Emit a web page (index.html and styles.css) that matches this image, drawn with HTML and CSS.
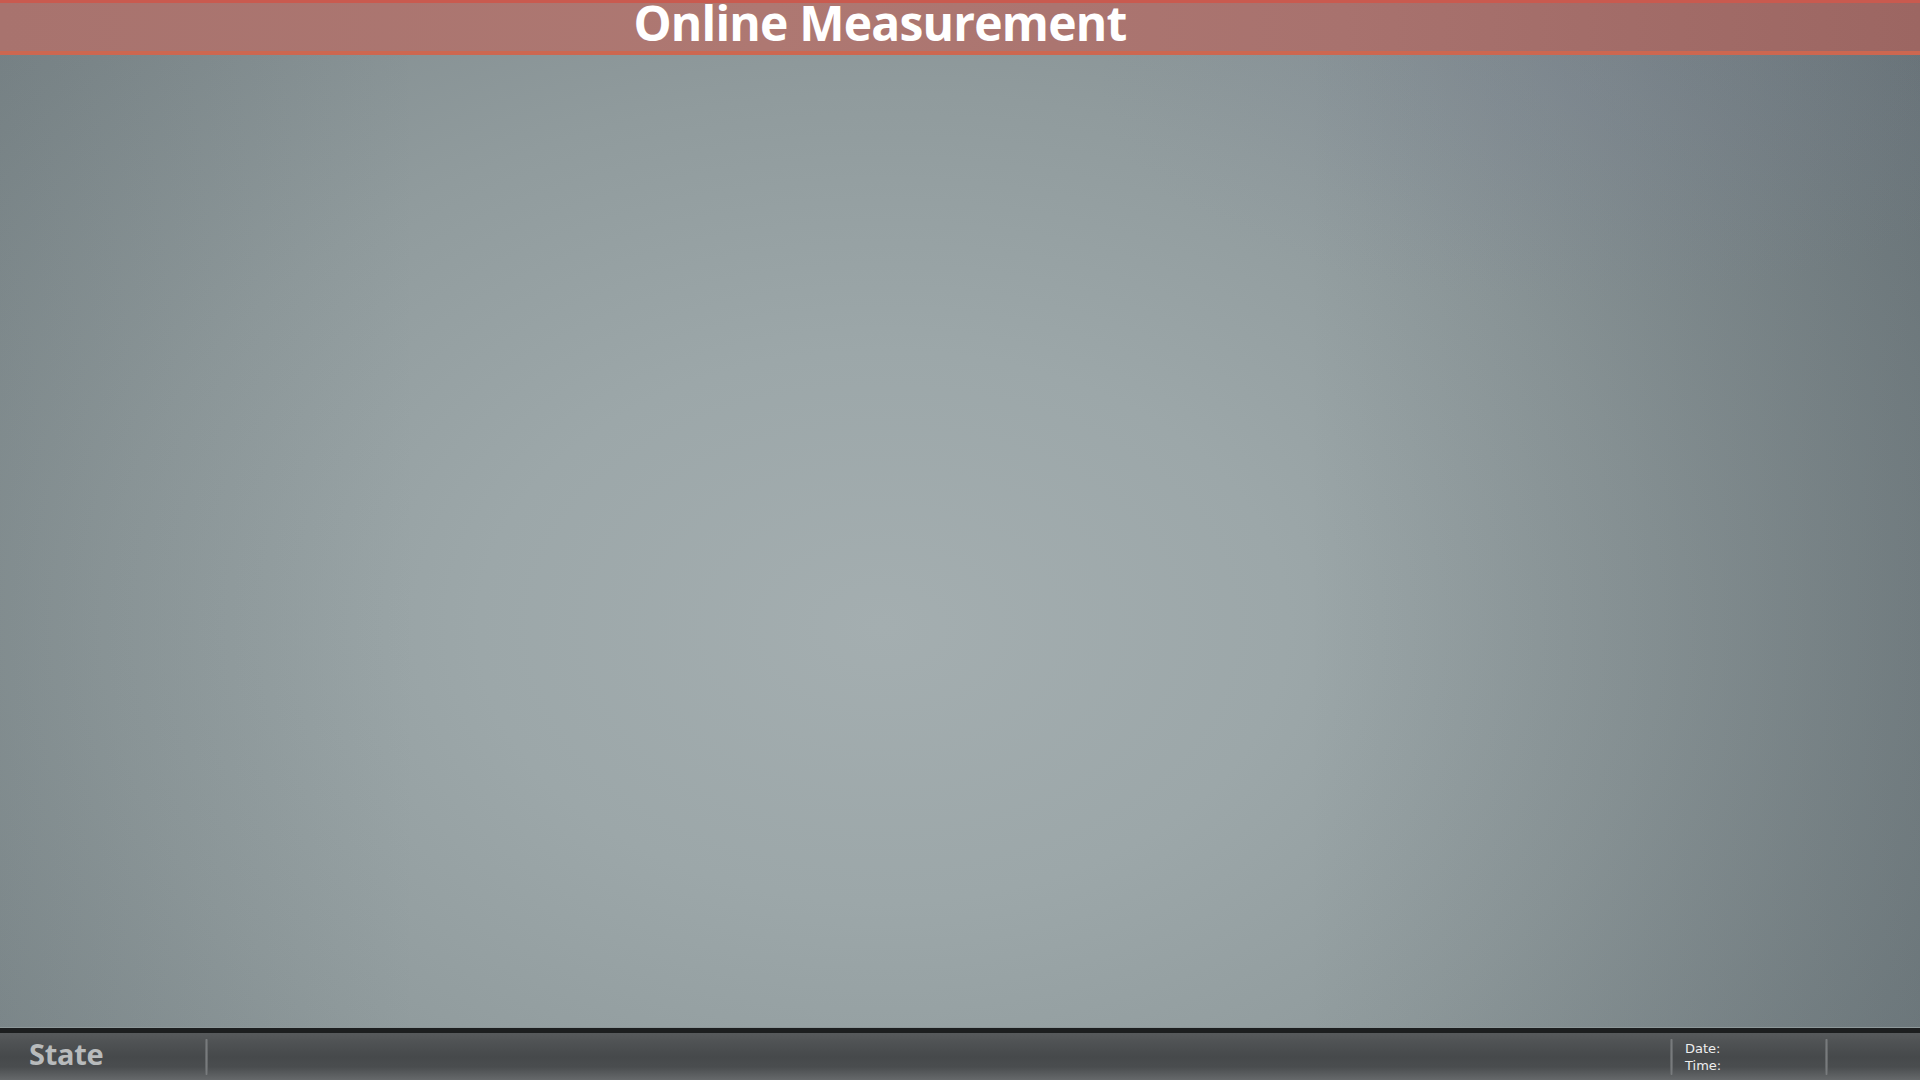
FILE: index.html
```html
<!DOCTYPE html>
<html>
<head>
<meta charset="utf-8">
<link rel="stylesheet" href="styles.css">
</head>
<body>
<div class="screen">
  <header class="titlebar">
    <h1 class="title">Online Measurement</h1>
  </header>
  <main class="workspace"></main>
  <footer class="statusbar">
    <div class="state">State</div>
    <div class="sep"></div>
    <div class="spacer"></div>
    <div class="sep"></div>
    <div class="clock">
      <div>Date:</div>
      <div>Time:</div>
    </div>
    <div class="sep"></div>
    <div class="tail"></div>
  </footer>
</div>
</body>
</html>
```

FILE: styles.css
```css
html, body {
  margin: 0;
  padding: 0;
  width: 1920px;
  height: 1080px;
  overflow: hidden;
}

.screen {
  width: 1920px;
  height: 1080px;
  display: flex;
  flex-direction: column;
  background:
    radial-gradient(ellipse 25% 20% at 82% 8%, rgba(130,136,158,0.22) 0%, rgba(130,136,158,0) 100%),
    linear-gradient(to right, rgba(40,50,55,0.10) 0%, rgba(0,0,0,0) 22%, rgba(0,0,0,0) 68%, rgba(30,40,48,0.20) 100%),
    radial-gradient(ellipse 70% 85% at 46% 58%, #a4aeb0 0%, #9ca7a9 30%, #909b9d 58%, #818c8f 85%, #7a8589 100%);
}

.titlebar {
  height: 51px;
  border-bottom: 4px solid #cd6750;
  box-shadow: inset 0 3px 0 #c95a4f;
  background: linear-gradient(to right, #a8736e 0%, #ae7872 40%, #a8726e 70%, #9c6662 100%);
  display: flex;
  align-items: flex-start;
  justify-content: center;
  padding-right: 160px;
}

.title {
  margin: 3px 0 0 0;
  font-family: "Open Sans", "Liberation Sans", sans-serif;
  font-weight: 700;
  font-size: 48px;
  line-height: 40px;
  color: #ffffff;
  letter-spacing: -0.8px;
}

.workspace {
  flex: 1;
}

.statusbar {
  height: 47px;
  border-top: 1px solid #8e989a;
  box-shadow: inset 0 5px 0 #1c1e1f;
  padding-top: 5px;
  background: linear-gradient(to bottom, #5b5e60 0%, #505355 25%, #46494b 55%, #4a4d4f 75%, #66696b 100%);
  display: flex;
  align-items: center;
}

.state {
  width: 176px;
  padding-left: 29px;
  margin-top: -6px;
  font-family: "Open Sans", "Liberation Sans", sans-serif;
  font-weight: 700;
  font-size: 29px;
  color: #b8bbbc;
  letter-spacing: -0.3px;
}

.sep {
  width: 3px;
  height: 36px;
  background: linear-gradient(to right, #5c5f61, #787b7d, #5c5f61);
  border-radius: 1px;
}

.spacer {
  flex: 1;
}

.clock {
  width: 140px;
  padding-left: 12px;
  font-family: "DejaVu Sans", "Liberation Sans", sans-serif;
  font-size: 13px;
  line-height: 17px;
  color: #eeeeee;
}

.tail {
  width: 92px;
}
```
